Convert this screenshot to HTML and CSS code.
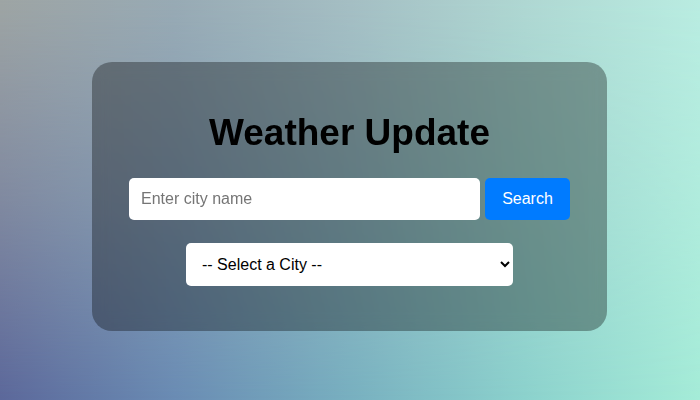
FILE: index.html
```html
<!DOCTYPE html>
<html lang="en">
<head>
<meta charset="utf-8">
<title>Weather Update</title>
<link rel="stylesheet" href="styles.css">
</head>
<body>
  <main class="card">
    <h1 class="title">Weather Update</h1>
    <div class="search-row">
      <input class="city-input" type="text" placeholder="Enter city name">
      <button class="search-btn" type="button">Search</button>
    </div>
    <div class="select-row">
      <select class="city-select">
        <option>-- Select a City --</option>
        <option>London</option>
        <option>New York</option>
        <option>Tokyo</option>
      </select>
    </div>
  </main>
</body>
</html>
```
FILE: styles.css
```css
html, body {
  margin: 0;
  height: 100%;
}
body {
  position: relative;
  box-sizing: border-box;
  padding-right: 1px;
  font-family: "Liberation Sans", Arial, sans-serif;
  background: linear-gradient(to right, #5c689b 0%, #6a8cb4 25%, #78b0c0 50%, #8cd2cd 75%, #a5ecd8 100%);
  display: flex;
  justify-content: center;
  align-items: flex-start;
}
body::before {
  content: "";
  position: absolute;
  inset: 0;
  z-index: -1;
  background: linear-gradient(to right, #9ea5a4 0%, #98aab4 25%, #a5bec3 50%, #afd7d2 75%, #b9ece1 100%);
  -webkit-mask-image: linear-gradient(to bottom, #000 0%, rgba(0,0,0,0.55) 50%, transparent 100%);
  mask-image: linear-gradient(to bottom, #000 0%, rgba(0,0,0,0.55) 50%, transparent 100%);
}
.card {
  margin-top: 62px;
  width: 515px;
  box-sizing: border-box;
  height: 269px;
  padding: 49px 37px 0;
  border-radius: 20px;
  background: rgba(0,0,0,0.33);
  backdrop-filter: blur(8px);
  display: flex;
  flex-direction: column;
  align-items: center;
}
.title {
  margin: 0;
  font-size: 37px;
  font-weight: bold;
  color: #000;
  line-height: 43px;
}
.search-row {
  margin-top: 24px;
  display: flex;
  gap: 5px;
  width: 441px;
}
.city-input {
  width: 351px;
  height: 42px;
  box-sizing: border-box;
  border: none;
  border-radius: 5px;
  padding: 0 12px;
  font-family: "Liberation Sans", Arial, sans-serif;
  font-size: 16px;
  color: #000;
  background: #fff;
  outline: none;
}
.city-input::placeholder {
  color: #757575;
}
.search-btn {
  width: 85px;
  height: 42px;
  border: none;
  border-radius: 5px;
  background: #007bff;
  color: #fff;
  font-family: "Liberation Sans", Arial, sans-serif;
  font-size: 16px;
  padding: 0;
}
.select-row {
  margin-top: 23px;
}
.city-select {
  width: 327px;
  height: 43px;
  border: none;
  border-radius: 5px;
  padding: 0 7px 0 12px;
  font-family: "Liberation Sans", Arial, sans-serif;
  font-size: 16px;
  color: #000;
  background: #fff;
}
```
